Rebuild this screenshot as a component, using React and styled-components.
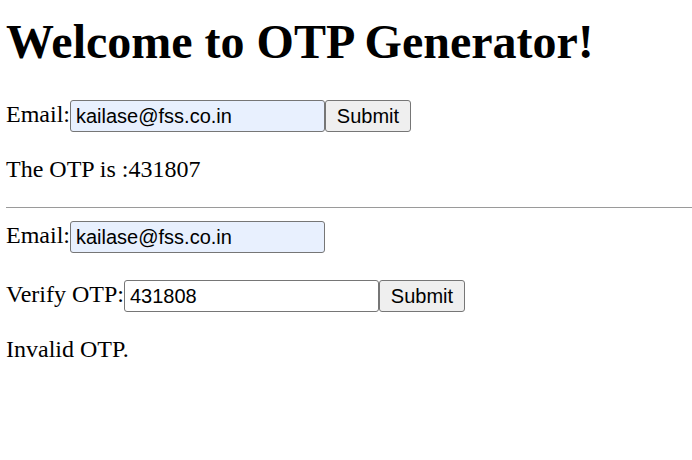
import React, { useState } from 'react';
import styled, { createGlobalStyle } from 'styled-components';

const GlobalStyle = createGlobalStyle`
  body {
    margin: 0;
    background: #ffffff;
    color: #000000;
    font-family: "Liberation Serif", "Times New Roman", serif;
  }
`;

const Page = styled.div`
  padding-left: 6px;
  display: flex;
  flex-direction: column;
`;

const Title = styled.h1`
  margin: 14px 0 0 0;
  font-size: 48px;
  line-height: 55px;
  font-weight: bold;
`;

const FormRow = styled.form`
  display: flex;
  align-items: flex-start;
  height: 32px;
  margin-top: ${props => props.gap}px;
`;

const Label = styled.span`
  font-size: 24px;
  line-height: 28px;
  white-space: nowrap;
`;

const TextInput = styled.input`
  box-sizing: border-box;
  width: 255px;
  height: 32px;
  margin: 0;
  padding: 0 5px;
  border: 1px solid #767676;
  border-radius: 3px;
  background: ${props => (props.autofilled ? '#e8f0fe' : '#ffffff')};
  font-family: "Liberation Sans", Arial, sans-serif;
  font-size: 20px;
  color: #000000;
  outline: none;
`;

const SubmitButton = styled.button`
  box-sizing: border-box;
  width: 86px;
  height: 32px;
  margin: 0;
  padding: 0;
  border: 1px solid #767676;
  border-radius: 3px;
  background: #efefef;
  font-family: "Liberation Sans", Arial, sans-serif;
  font-size: 20px;
  color: #000000;
  cursor: pointer;
`;

const Message = styled.p`
  margin: ${props => props.gap}px 0 0 0;
  font-size: 24px;
  line-height: 28px;
`;

const Divider = styled.hr`
  margin: 24px 0 0 0;
  border: none;
  height: 1px;
  background: #9a9a9a;
`;

export default function App() {
  const [email, setEmail] = useState('kailase@fss.co.in');
  const [verifyEmail, setVerifyEmail] = useState('kailase@fss.co.in');
  const [otp, setOtp] = useState('431808');

  return (
    <>
      <GlobalStyle />
      <Page>
        <Title>Welcome to OTP Generator!</Title>
        <FormRow gap={31} onSubmit={e => e.preventDefault()}>
          <Label>Email:</Label>
          <TextInput autofilled value={email} onChange={e => setEmail(e.target.value)} />
          <SubmitButton type="submit">Submit</SubmitButton>
        </FormRow>
        <Message gap={23}>The OTP is :431807</Message>
        <Divider />
        <FormRow gap={13} onSubmit={e => e.preventDefault()}>
          <Label>Email:</Label>
          <TextInput autofilled value={verifyEmail} onChange={e => setVerifyEmail(e.target.value)} />
        </FormRow>
        <FormRow gap={27} onSubmit={e => e.preventDefault()}>
          <Label>Verify OTP:</Label>
          <TextInput value={otp} onChange={e => setOtp(e.target.value)} />
          <SubmitButton type="submit">Submit</SubmitButton>
        </FormRow>
        <Message gap={23}>Invalid OTP.</Message>
      </Page>
    </>
  );
}
